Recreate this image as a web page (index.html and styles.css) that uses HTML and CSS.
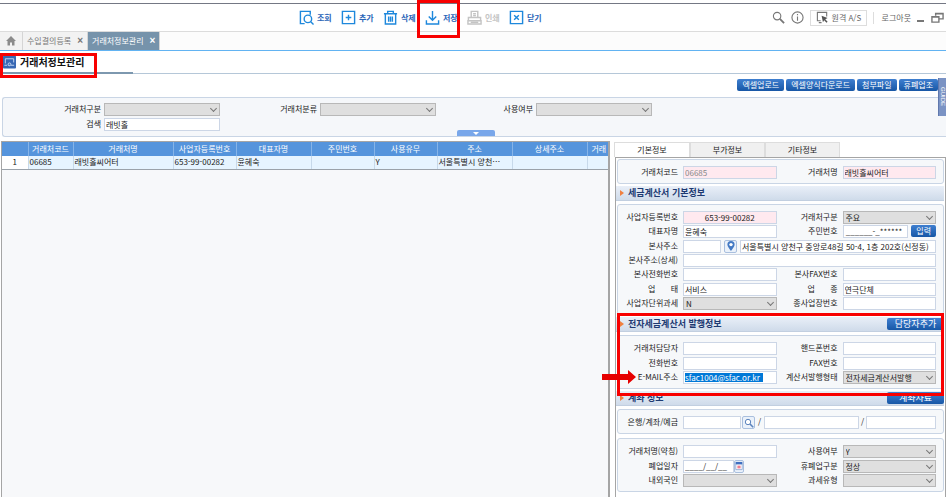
FILE: index.html
```
<!DOCTYPE html>
<html lang="ko">
<head>
<meta charset="utf-8">
<title>거래처정보관리</title>
<link rel="stylesheet" href="styles.css">
</head>
<body>
<header class="toolbar">
  <nav class="actions">
    <button class="action"><svg viewBox="0 0 16 16"><path d="M12 5V1.5H1.5v13H6"/><circle cx="9.5" cy="9.5" r="4"/><path d="M12.5 12.5l3 3"/></svg>조회</button>
    <button class="action"><svg viewBox="0 0 16 16"><path d="M1.5 1.5h13v13h-13zM8 5v6M5 8h6"/></svg>추가</button>
    <button class="action"><svg viewBox="0 0 16 16"><path d="M1 4h14M5 4V1.500h6V4M2.500 4v11h11V4M6 7v5.500M8 7v5.500M10 7v5.500"/></svg>삭제</button>
    <button class="action marked"><svg viewBox="0 0 16 16"><path d="M8 1v10M4 7l4 4 4-4M1.500 11v4h13v-4"/></svg>저장<span class="callout callout-save"></span></button>
    <button class="action" disabled><svg viewBox="0 0 16 16"><path d="M4.500 8V1.500h7V8M6.500 4h3M6.500 6h3M1.500 11V8h13v3M1 11.500h14v3.500H1zM4 13.200h8"/></svg>인쇄</button>
    <button class="action"><svg viewBox="0 0 16 16"><path d="M1.500 1.500h13v13h-13zM5.500 5.500l5 5M10.500 5.500l-5 5"/></svg>닫기</button>
  </nav>
  <div class="utilities">
    <button class="tool" aria-label="검색"><svg viewBox="0 0 14 14"><circle cx="5.500" cy="5.500" r="4"/><path d="M8.500 8.500l4.500 4.500" stroke-width="2"/></svg></button>
    <button class="tool" aria-label="정보"><svg viewBox="0 0 14 14"><circle cx="7" cy="7" r="6"/><path d="M7 6v4.500M7 3.300v1.400"/></svg></button>
    <button class="remote"><svg viewBox="0 0 14 14"><path d="M5 10.500H1.500v-9h10V6M3 12.500h3"/><path d="M6 5l6.500 2.500-2.500 1.300 2.500 2.700-1.200 1.200-2.500-2.700L7.500 12z" fill="#555" stroke="none"/></svg>원격 A/S</button>
    <a class="logout" href="#">로그아웃</a>
    <button class="tool win" aria-label="최소화"><svg viewBox="0 0 8 12"><path d="M0 9.500h7" stroke-width="2"/></svg></button>
    <button class="tool" aria-label="창 복원"><svg viewBox="0 0 14 14"><path d="M5 5V2.500h8v6H9M5 3h8M1 6h7.500v6H1zM1 6.500h7.500" stroke-width="1.500"/></svg></button>
  </div>
</header>

<nav class="tabs">
  <a class="tab home" href="#" aria-label="홈"><svg viewBox="0 0 10 10"><path d="M5 0L0 5h1.500v4.500H4V6.500h2v3h2.500V5H10z" fill="#8b8b8b"/></svg></a>
  <a class="tab" href="#">수입결의등록<span class="x">×</span></a>
  <a class="tab active" href="#">거래처정보관리<span class="x">×</span></a>
</nav>

<div class="title-row">
  <div class="title">
    <svg class="title-icon" viewBox="0 0 14 14"><rect width="14" height="14" rx="1" fill="#3868b4"/><path d="M2.500 8.500V3.500h9v4M1.500 10.500h3M6 10.500h1M8.500 10.500h3.500" stroke="#c9daf4" fill="none"/><circle cx="7" cy="9.500" r="1.500" stroke="#c9daf4" fill="none"/></svg>
    <h1>거래처정보관리</h1>
    <span class="callout callout-title"></span>
  </div>
</div>

<div class="commands">
  <button class="btn">엑셀업로드</button>
  <button class="btn">엑셀양식다운로드</button>
  <button class="btn">첨부파일</button>
  <button class="btn">휴폐업조</button>
  <span class="guide">GUIDE</span>
</div>

<form class="search">
  <label for="s1">거래처구분</label><span class="select"><select id="s1"><option></option></select></span>
  <label for="s2">거래처분류</label><span class="select"><select id="s2"><option></option></select></span>
  <label for="s3">사용여부</label><span class="select"><select id="s3"><option></option></select></span>
  <label for="s4">검색</label><input id="s4" value="래빗홀">
  <button type="button" class="fold" aria-label="접기"></button>
</form>

<main class="work">
  <section class="list">
    <table>
      <colgroup><col class="c-no"><col class="c-code"><col class="c-name"><col class="c-id"><col class="c-wide"><col class="c-id"><col class="c-id"><col class="c-wide"><col class="c-wide"><col class="c-wide"></colgroup>
      <thead><tr><th></th><th>거래처코드</th><th>거래처명</th><th>사업자등록번호</th><th>대표자명</th><th>주민번호</th><th>사용유무</th><th>주소</th><th>상세주소</th><th class="cut">거래</th></tr></thead>
      <tbody><tr><td class="no">1</td><td>06685</td><td>래빗홀씨어터</td><td>653-99-00282</td><td>윤혜숙</td><td></td><td>Y</td><td>서울특별시 양천…</td><td></td><td></td></tr></tbody>
    </table>
  </section>

  <section class="detail">
    <nav class="subtabs">
      <button class="on">기본정보</button><button>부가정보</button><button>기타정보</button>
    </nav>
    <div class="sheet">
      <div class="panel">
        <label for="code">거래처코드</label><input id="code" class="need dim" value="06685">
        <label for="name">거래처명</label><input id="name" class="need" value="래빗홀씨어터">
      </div>

      <h2>세금계산서 기본정보</h2>
      <div class="panel seven">
        <label for="bizno">사업자등록번호</label><input id="bizno" class="need center" value="653-99-00282">
        <label for="kind">거래처구분</label><span class="select"><select id="kind"><option>주요</option></select></span>
        <label for="ceo">대표자명</label><input id="ceo" value="윤혜숙">
        <label for="rrn">주민번호</label><span class="pair"><input id="rrn" class="right" value="______-_******"><button class="btn">입력</button></span>
        <label for="addr">본사주소</label>
        <span class="span-rest pair"><input id="addr" class="zip"><button class="mini" aria-label="주소 찾기"><svg viewBox="0 0 10 10"><path d="M5 0a3.600 3.600 0 0 0-3.600 3.600C1.400 6 5 10 5 10s3.600-4 3.600-6.400A3.600 3.600 0 0 0 5 0z" fill="#4379c4"/><circle cx="5" cy="3.600" r="1.700" fill="#fff"/></svg></button><input aria-label="주소" class="address" value="서울특별시 양천구 중앙로48길 50-4, 1층 202호(신정동)"></span>
        <label for="addr2">본사주소(상세)</label><input id="addr2" class="span-rest">
        <label for="tel0">본사전화번호</label><input id="tel0">
        <label for="fax0">본사FAX번호</label><input id="fax0">
        <label for="type" class="spread"><span>업</span><span>태</span></label><input id="type" value="서비스">
        <label for="item" class="spread"><span>업</span><span>종</span></label><input id="item" value="연극단체">
        <label for="unit">사업자단위과세</label><span class="select"><select id="unit"><option>N</option></select></span>
        <label for="sub">종사업장번호</label><input id="sub">
      </div>

      <div class="issue">
        <h2>전자세금계산서 발행정보<button class="btn wide">담당자추가</button></h2>
        <div class="panel three">
          <label for="mgr">거래처담당자</label><input id="mgr">
          <label for="hp">핸드폰번호</label><input id="hp">
          <label for="tel">전화번호</label><input id="tel">
          <label for="fax">FAX번호</label><input id="fax">
          <label for="mail">E-MAIL주소</label><span class="field"><input id="mail" class="selected" value="sfac1004@sfac.or.kr"></span>
          <label for="form">계산서발행형태</label><span class="select"><select id="form"><option>전자세금계산서발행</option></select></span>
        </div>
        <span class="callout callout-issue"></span>
        <svg class="arrow" viewBox="0 0 34 14"><path d="M0 4h26V0l8 7-8 7v-4H0z" fill="#e60000"/></svg>
      </div>

      <h2>계좌 정보<button class="btn wide">계좌자료</button></h2>
      <div class="panel">
        <label for="bank">은행/계좌/예금</label>
        <span class="span-rest bank"><input id="bank"><button class="mini" aria-label="은행 찾기"><svg viewBox="0 0 10 10"><circle cx="4" cy="4" r="2.700" fill="#fff" stroke="#5b83bd"/><path d="M6 6l3.200 3.200" stroke="#5b83bd" stroke-width="1.600"/></svg></button><span>/</span><input aria-label="계좌"><span>/</span><input aria-label="예금주"></span>
      </div>
      <div class="panel three">
        <label for="short">거래처명(약칭)</label><input id="short">
        <label for="use">사용여부</label><span class="select"><select id="use"><option>Y</option></select></span>
        <label for="close">폐업일자</label><span class="date"><input id="close" value="____/__/__"><button class="mini cal" aria-label="달력"><svg viewBox="0 0 10 10"><path d="M1 .5h8v9H1z" fill="#fff" stroke="#8aa5cf"/><path d="M1 0h8v3H1z" fill="#3f6fc0"/><path d="M3 4.500h4v3.500H3z" fill="#ec7f92"/></svg></button></span>
        <label for="state">휴폐업구분</label><span class="select"><select id="state"><option>정상</option></select></span>
        <label for="nation">내외국인</label><span class="select"><select id="nation"><option></option></select></span>
        <label for="tax">과세유형</label><span class="select"><select id="tax"><option></option></select></span>
      </div>
    </div>
  </section>
</main>
</body>
</html>
```
FILE: styles.css
```
* { box-sizing: border-box; }
body {
  margin: 0;
  height: 100vh;
  overflow: hidden;
  display: flex;
  flex-direction: column;
  background: #fff;
  color: #222;
  font: 8px/12px "Noto Sans CJK KR", sans-serif;
}
button, input, select { font: inherit; color: inherit; margin: 0; padding: 0; border: 0; border-radius: 0; }
button { background: none; white-space: nowrap; }
a { color: inherit; text-decoration: none; }
svg { display: block; flex: none; }
label { text-align: right; white-space: nowrap; }

.callout { position: absolute; border: 3px solid #f80000; pointer-events: none; }

/* toolbar */
.toolbar {
  display: flex;
  justify-content: space-between;
  align-items: center;
  height: 29px;
  margin-top: 3px;
  padding: 0 2px 0 299px;
  border-top: 1px solid #747884;
  border-bottom: 1px solid #dcdcdc;
}
.actions { display: grid; grid-template-columns: repeat(6, 42px); }
.action { display: flex; align-items: center; gap: 3px; color: #2c66b8; font-weight: 700; }
.action svg { width: 15px; height: 15px; fill: none; stroke: #1e88dc; stroke-width: 1.5; }
.action:disabled { color: #c4c4c4; }
.action:disabled svg { stroke: #c4c4c4; }
.marked { position: relative; }
.callout-save { left: -8px; top: -10px; width: 43px; height: 38px; }
.utilities { display: flex; align-items: center; gap: 6px; color: #666; }
.tool svg, .remote svg { width: 13px; height: 13px; fill: none; stroke: #777; stroke-width: 1.2; }
.tool.win svg { width: 8px; }
.remote { display: flex; align-items: center; gap: 3px; height: 16px; width: 57px; padding-left: 5px; border: 1px solid #ddd; }
.logout { padding-left: 8px; border-left: 1px solid #ddd; }

/* document tabs */
.tabs { display: flex; height: 19px; background: #fcfcfc; border-bottom: 1px solid #62b3f2; }
.tab {
  display: flex;
  align-items: center;
  gap: 6px;
  padding: 0 4px;
  background: #f2f2f2;
  border-right: 1px solid #d5d5d5;
  color: #777;
}
.home { padding: 0 6px; }
.home svg { width: 10px; height: 10px; }
.tab.active { background: #7693ab; color: #fff; }
.x { font: 700 10px/12px "Liberation Sans", sans-serif; }

/* page title */
.title-row { height: 23px; border-bottom: 1px solid #b5c7d8; }
.title { position: relative; display: flex; align-items: center; gap: 4px; width: 133px; height: 23px; padding-left: 3px; border-bottom: 2px solid #7d98af; }
.title-icon { width: 13px; height: 14px; }
h1 { margin: 0; color: #111; font: 700 10px/14px "Noto Sans CJK KR", sans-serif; }
.callout-title { left: 0; top: 2px; width: 97px; height: 25px; }

.commands { position: relative; z-index: 1; display: flex; justify-content: flex-end; gap: 2px; height: 23px; padding: 5px 8px 0 0; }
.btn {
  height: 12px;
  padding: 0 5px;
  border-radius: 2px;
  background: linear-gradient(#3f7fd0, #1757a6);
  color: #fff;
  line-height: 12px;
}
.guide {
  position: absolute;
  right: 0;
  top: 4px;
  display: flex;
  justify-content: center;
  align-items: center;
  width: 8px;
  height: 38px;
  background: #7b93c4;
  border-left: 1px solid #6078ad;
  color: #fff;
  font: 6px/7px "Liberation Sans", sans-serif;
  writing-mode: vertical-rl;
}

/* fields */
input, select { width: 100%; min-width: 0; height: 13px; border: 1px solid #ccd6e6; background: #fff; padding: 0 1px; outline: 0; }
.select { position: relative; display: block; min-width: 0; }
.select::after {
  content: "";
  position: absolute;
  right: 4px;
  top: 3px;
  width: 4px;
  height: 4px;
  border: solid #777;
  border-width: 0 1px 1px 0;
  transform: rotate(45deg);
}
select { display: block; appearance: none; background: #dfdfdf; border-color: #b8b8b8; padding: 0 2px; line-height: 11px; }
.need { background: #ffe9ef; }
.dim { color: #888; }
.center { text-align: center; }
.right { text-align: right; padding-right: 5px; }

.search {
  position: relative;
  display: grid;
  grid-template-columns: 98px 116px 94px 116px 94px 116px;
  gap: 2px 3px;
  margin-left: 2px;
  padding: 5px 0;
  border: 1px solid #c9d5e5;
  border-right: 0;
  border-radius: 3px 0 0 3px;
  background: #f5f7fa;
}
.fold { position: absolute; left: 454px; bottom: 0; width: 38px; height: 6px; border-radius: 2px 2px 0 0; background: #79a7ea; }
.fold::after { content: ""; position: absolute; left: 16px; top: 2px; border: 3px solid transparent; border-top-color: #fff; border-bottom: 0; }
.search label:nth-of-type(4) { grid-column: 1; }

/* work area */
.work { flex: 1; min-height: 0; display: grid; grid-template-columns: minmax(0, 1fr) 332px; gap: 4px; margin-top: 4px; padding-left: 1px; }
.list { overflow: hidden; border: solid #a5a5a5; border-width: 1px 2px 0 1px; background: #f7f8fa; }
table { width: 660px; table-layout: fixed; border-collapse: collapse; }
.c-no { width: 26px; }
.c-code { width: 45px; }
.c-name { width: 100px; }
.c-id { width: 63px; }
.c-wide { width: 75px; }
th { height: 14px; padding: 0; background: #5594dc; border-right: 1px solid #86b4e8; color: #fff; font-weight: 400; }
td { height: 13px; padding: 0 1px; background: #e6f4ff; border-right: 1px solid #c7d9ea; border-bottom: 1px solid #9aa2aa; white-space: nowrap; overflow: hidden; }
.no { background: #fff; text-align: center; }
.cut { text-align: left; padding-left: 4px; }

.detail { display: flex; flex-direction: column; min-width: 0; }
.subtabs { display: flex; height: 15px; margin-top: 1px; }
.subtabs button { width: 75px; background: #f0f0f0; border: 1px solid #ddd; border-bottom: 0; }
.subtabs .on { width: 76px; background: #fff; }
.sheet { flex: 1; margin-left: 1px; padding: 1px 1px 0; border: solid #a5a5a5; border-width: 1px 1px 0 1px; }
.panel {
  display: grid;
  grid-template-columns: 60px minmax(0, 1fr) 56px minmax(0, 1fr);
  grid-auto-rows: 13px;
  column-gap: 5px;
  align-content: space-between;
  padding: 6px 7px 4px 0;
  border: 1px solid #c9d5e5;
  border-radius: 3px;
  background: #f6f8fa;
}
.panel + .panel { margin-top: 4px; }
.seven { min-height: 111px; }
.three { min-height: 54px; }
.span-rest { grid-column: 2 / -1; }
.spread { display: flex; justify-content: space-between; width: 30px; justify-self: end; }
.pair { display: flex; gap: 3px; }
.pair .btn { flex: none; }
.zip { flex: 0 0 38px; }
.mini { flex: none; display: grid; place-items: center; width: 13px; height: 13px; border: 1px solid #a9bfde; border-radius: 2px; background: #eaf1fa; }
.mini svg { width: 10px; height: 10px; }
.bank { display: grid; grid-template-columns: 58px 13px 7px 95px 5px 1fr; column-gap: 1px; text-align: center; }
.date { display: grid; grid-template-columns: 51px 10px; }
.cal { width: 10px; }
.cal svg { width: 8px; }
.field { height: 13px; padding: 1px; border: 1px solid #ccd6e6; background: #fff; }
.selected { display: block; width: 78px; height: 9px; padding: 0; border: 0; background: #0078d7; color: #fff; line-height: 9px; }

h2 {
  display: flex;
  align-items: center;
  height: 15px;
  margin: 2px 0 3px -1px;
  padding-left: 4px;
  background: linear-gradient(#e9eff8, #cfdbea);
  border-bottom: 1px solid #c2cfe0;
  color: #1d3a72;
  font-size: 9px;
  line-height: 14px;
}
h2::before { content: ""; margin-right: 4px; border: 3px solid transparent; border-left: 4px solid #f08040; border-right: 0; }
.wide { width: 57px; margin-left: auto; font-size: 9px; font-weight: 400; }
.issue { position: relative; }
.callout-issue { left: 0; right: 0; top: -4px; height: 83px; }
.arrow { position: absolute; left: -15px; top: 53px; width: 34px; height: 14px; }
```
